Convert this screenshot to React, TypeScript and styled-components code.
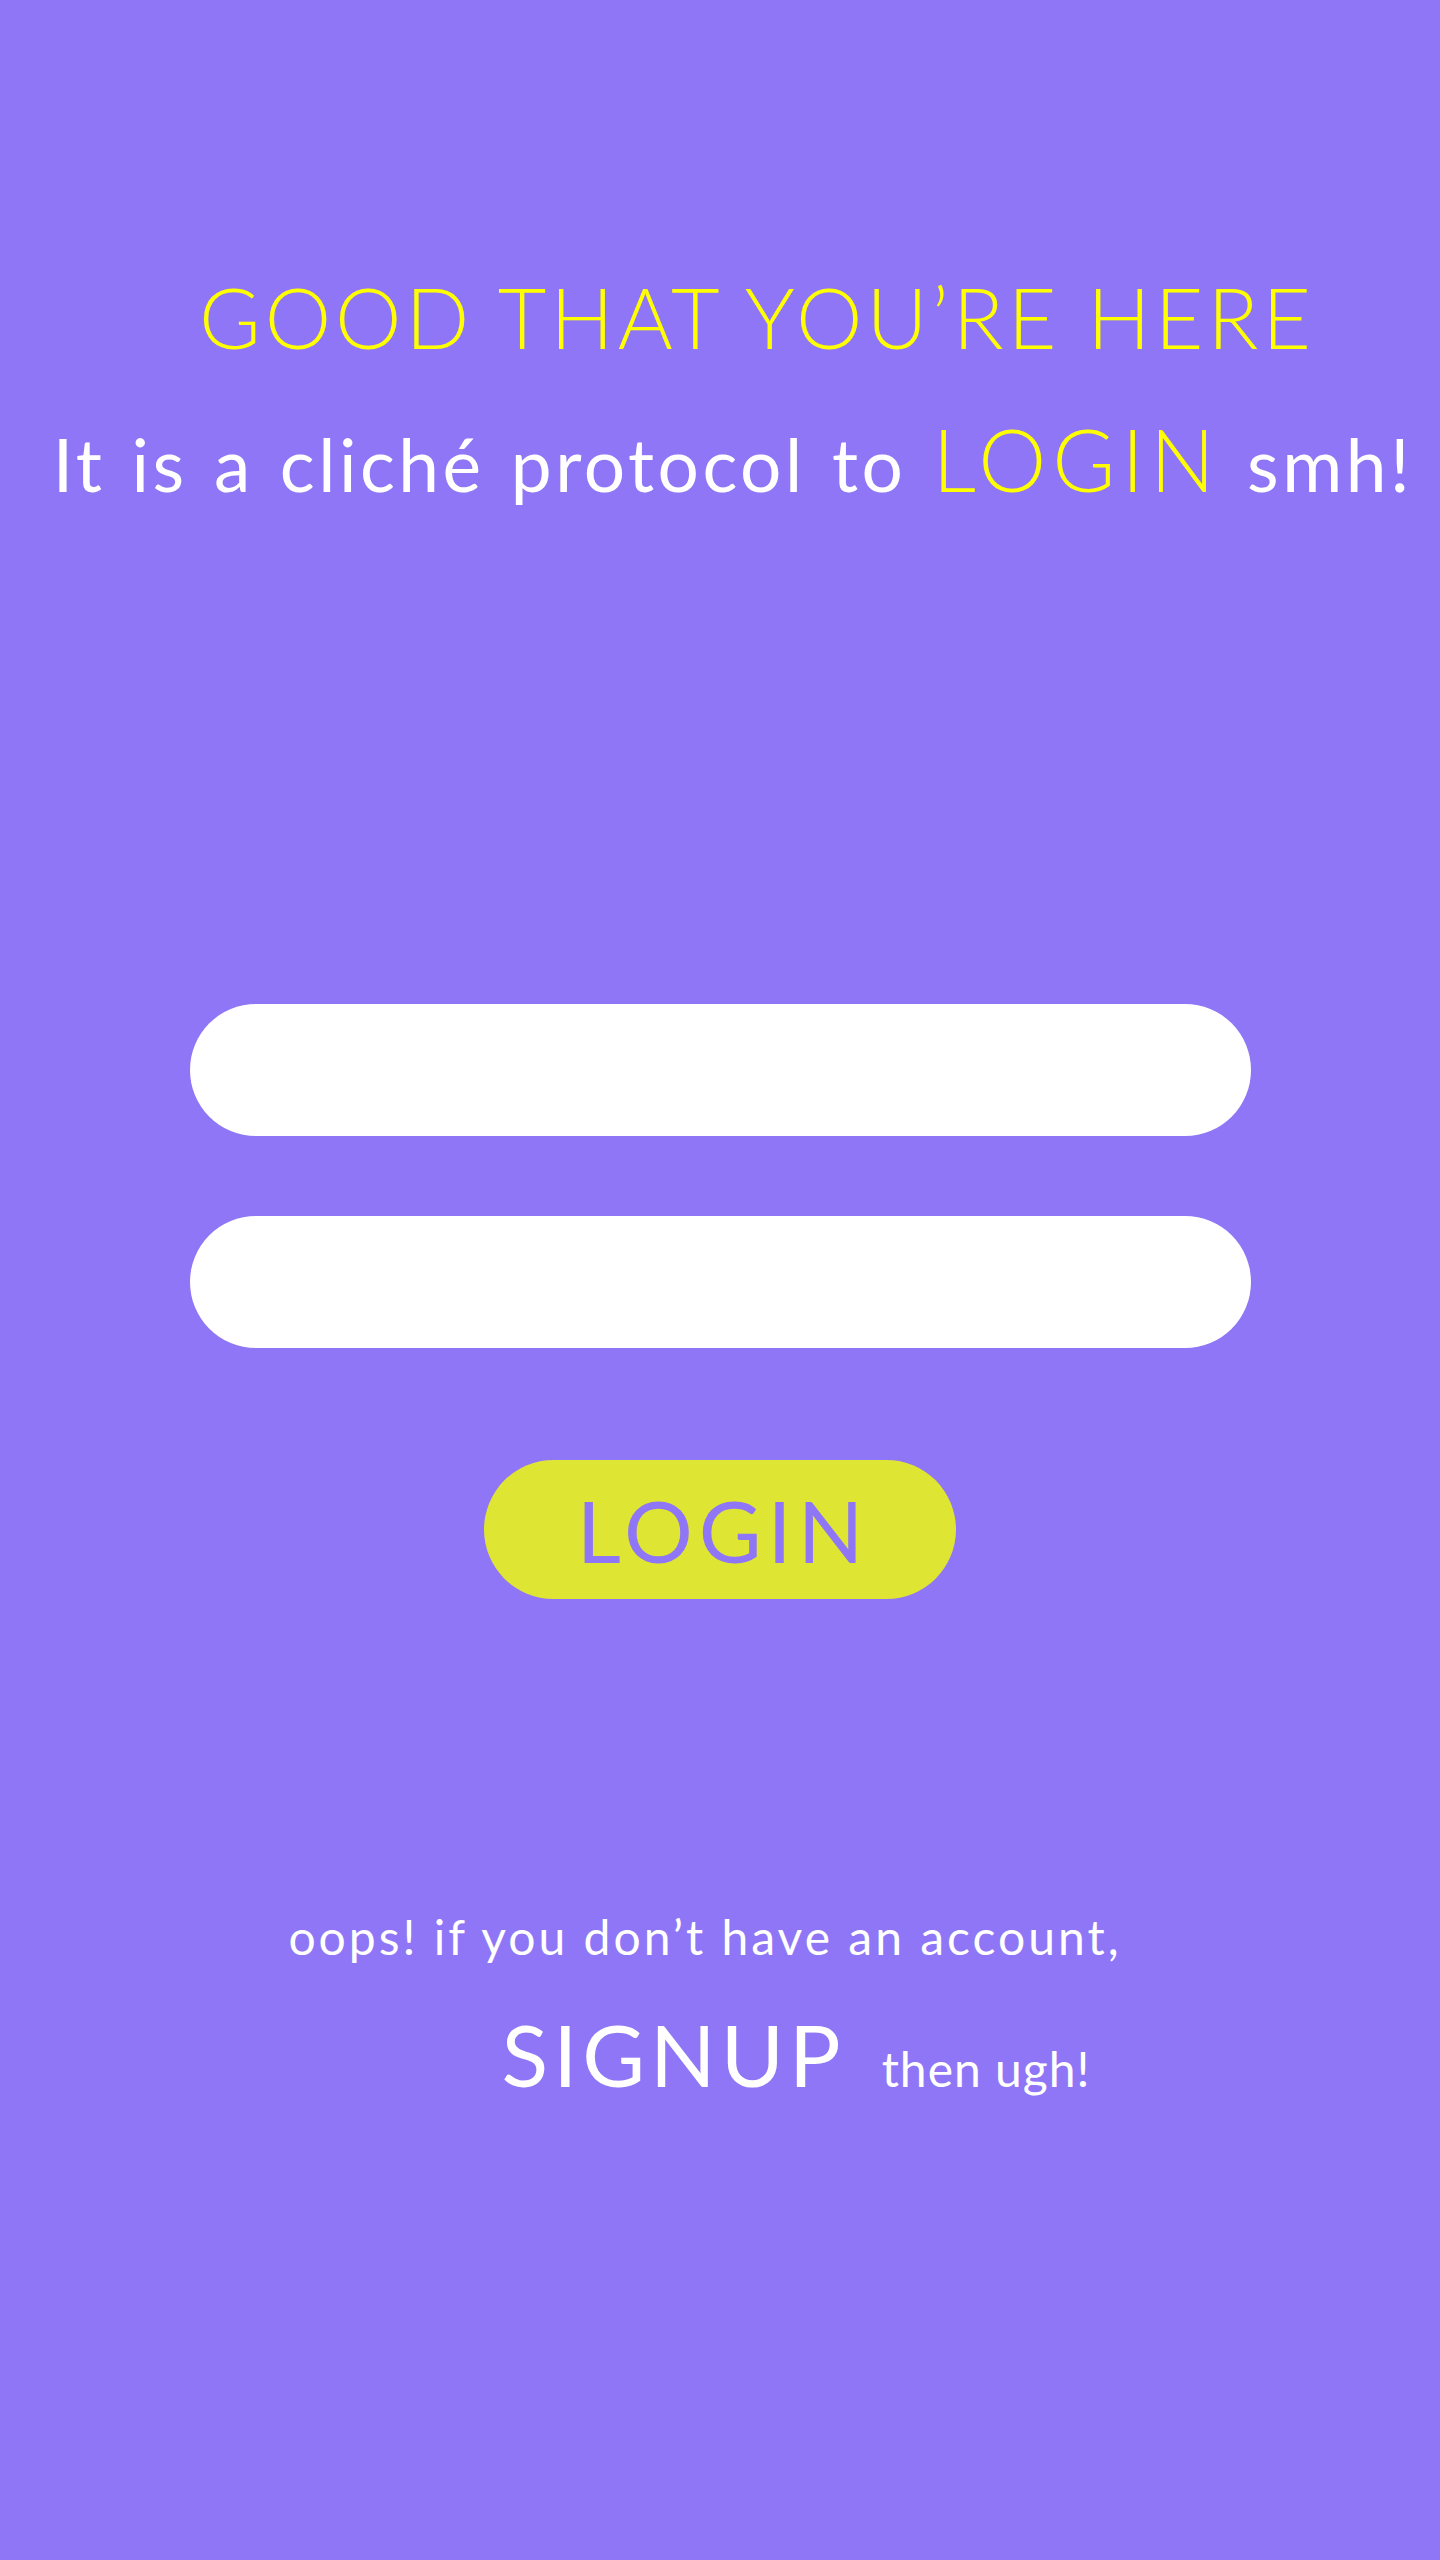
import styled, { createGlobalStyle } from 'styled-components'

const GlobalStyle = createGlobalStyle`
  html, body {
    margin: 0;
    padding: 0;
    background-color: #8f76f6;
  }
  * {
    box-sizing: border-box;
  }
`

const Page = styled.div`
  width: 1440px;
  min-height: 2560px;
  display: flex;
  flex-direction: column;
  align-items: center;
  background-color: #8f76f6;
  font-family: Lato, 'Noto Sans', sans-serif;
  color: #ffffff;
  line-height: 1;
`

const Title = styled.h1`
  margin: 275px 0 0 0;
  padding-left: 74px;
  font-size: 84px;
  font-weight: 300;
  line-height: 1;
  color: #ffff00;
  letter-spacing: 4px;
  white-space: nowrap;
`

const Subtitle = styled.p`
  margin: 57px 0 0 0;
  padding-left: 26px;
  font-size: 73px;
  font-weight: 400;
  line-height: 1;
  white-space: nowrap;
  letter-spacing: 3.5px;
  word-spacing: 4px;
`

const Highlight = styled.span`
  font-size: 86px;
  font-weight: 300;
  color: #ffff00;
  letter-spacing: 6px;
`

const Form = styled.form`
  display: flex;
  flex-direction: column;
  align-items: center;
  margin-top: 502px;
  gap: 80px;
`

const Input = styled.input`
  width: 1061px;
  height: 132px;
  border: none;
  border-radius: 66px;
  background-color: #ffffff;
  outline: none;
  padding: 0 60px;
  font-family: inherit;
  font-size: 40px;
`

const LoginButton = styled.button`
  display: flex;
  align-items: center;
  justify-content: center;
  width: 472px;
  height: 139px;
  margin-top: 32px;
  padding: 0 0 0 6px;
  border: none;
  border-radius: 70px;
  background-color: #dee532;
  color: #8f76f6;
  font-family: inherit;
  font-size: 86px;
  font-weight: 400;
  line-height: 1;
  letter-spacing: 6px;
  cursor: pointer;
`

const Footer = styled.div`
  display: flex;
  flex-direction: column;
  align-items: center;
  margin-top: 314px;
`

const Note = styled.p`
  margin: 0;
  padding-right: 30px;
  font-size: 48px;
  font-weight: 400;
  line-height: 1;
  letter-spacing: 3px;
  white-space: nowrap;
`

const SignupRow = styled.div`
  display: flex;
  align-items: baseline;
  gap: 36px;
  margin-top: 50px;
  padding-left: 152px;
`

const SignupLink = styled.a`
  font-size: 86px;
  font-weight: 400;
  line-height: 1;
  letter-spacing: 5px;
  color: #ffffff;
  text-decoration: none;
  cursor: pointer;
`

const Aside = styled.span`
  font-size: 48px;
  font-weight: 400;
  line-height: 1;
  letter-spacing: 1px;
`

const App = () => {
  return (
    <Page>
      <GlobalStyle />
      <Title>GOOD THAT YOU’RE HERE</Title>
      <Subtitle>
        It is a cliché protocol to <Highlight>LOGIN</Highlight> smh!
      </Subtitle>
      <Form onSubmit={e => e.preventDefault()}>
        <Input type="text" aria-label="username" />
        <Input type="password" aria-label="password" />
        <LoginButton type="submit">LOGIN</LoginButton>
      </Form>
      <Footer>
        <Note>oops! if you don’t have an account,</Note>
        <SignupRow>
          <SignupLink>SIGNUP</SignupLink>
          <Aside>then ugh!</Aside>
        </SignupRow>
      </Footer>
    </Page>
  )
}

export default App
